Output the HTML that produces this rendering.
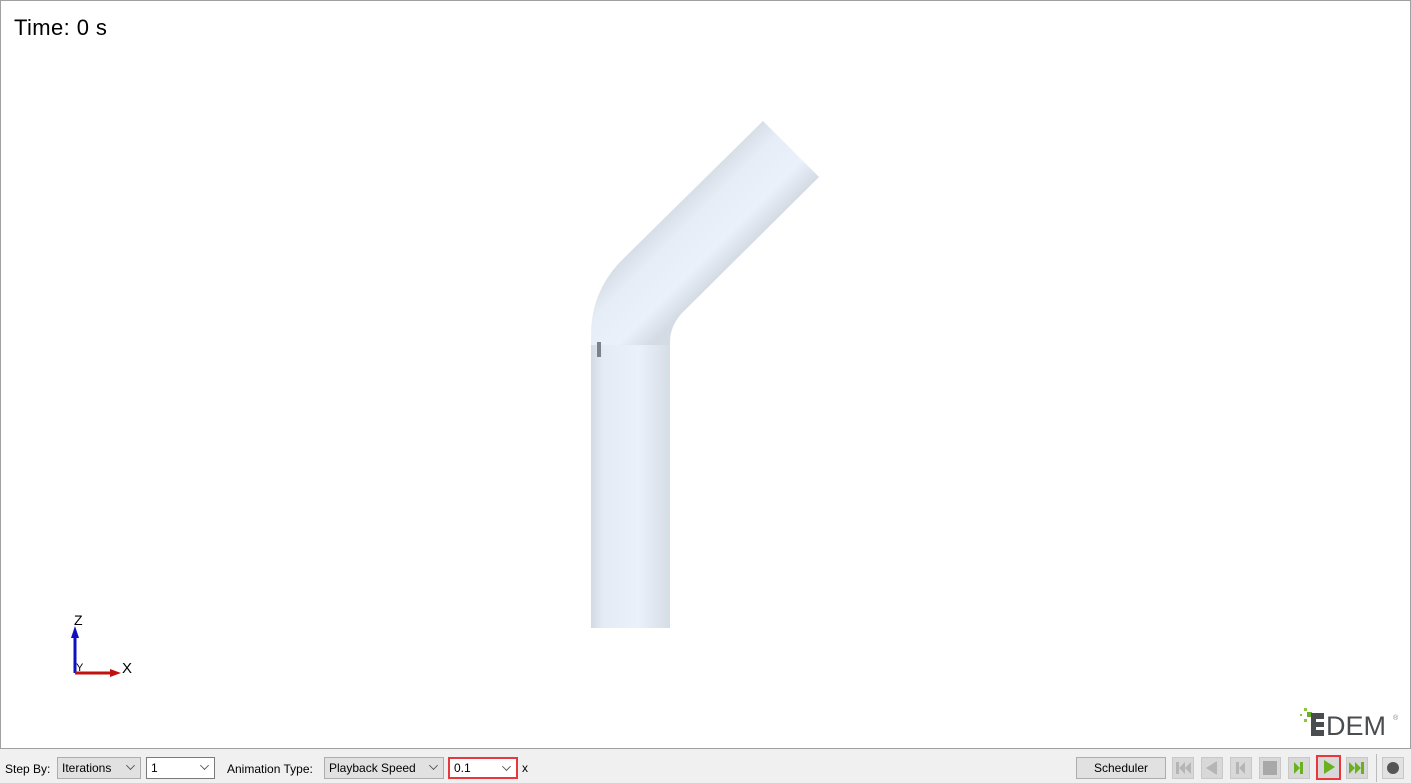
<!DOCTYPE html>
<html><head><style>
*{margin:0;padding:0;box-sizing:border-box}
body{width:1411px;height:783px;background:#f0f0f0;font-family:"Liberation Sans",sans-serif;position:relative;overflow:hidden}
#view{position:absolute;left:0;top:0;width:1411px;height:749px;background:#fff;border:1px solid #a0a0a0}
.t{position:absolute;font-size:12px;color:#000}
.box{position:absolute;top:757px;height:22px;border:1px solid #adadad;background:#e1e1e1;font-size:12px;line-height:20px;padding-left:4px}
.box.w{background:#fff;border-color:#7a7a7a}
.chev{position:absolute;right:6px;width:7px;height:7px;border-right:1px solid #555;border-bottom:1px solid #555;transform:rotate(45deg) scale(.9);top:4px}
.btn{position:absolute;top:757px;width:22px;height:22px;border:1px solid #c8c8c8;background:#d8d8d8}
</style></head><body>
<div id="view">
<div style="position:absolute;left:13px;top:14px;font-size:22px;letter-spacing:0.4px">Time: 0 s</div>
<svg width="1411" height="749" style="position:absolute;left:-1px;top:-1px">
<defs><linearGradient id="g" x1="0" x2="1"><stop offset="0" stop-color="#d2d9e2"/><stop offset=".15" stop-color="#e4ebf4"/><stop offset=".6" stop-color="#eaf1fa"/><stop offset="1" stop-color="#d6dde6"/></linearGradient>
<linearGradient id="g2" gradientUnits="userSpaceOnUse" x1="735" y1="150" x2="790" y2="205"><stop offset="0" stop-color="#d8dfe8"/><stop offset=".25" stop-color="#e6edf7"/><stop offset=".7" stop-color="#eaf1fb"/><stop offset="1" stop-color="#d4dbe4"/></linearGradient></defs>
<path d="M763,121 L819,177 L682,313 Q670,326 670,342 L670,628 L591,628 L591,335 Q591,290 624,258 Z" fill="url(#g2)"/>
<rect x="591" y="345" width="79" height="283" fill="url(#g)"/>
<rect x="597" y="342" width="4" height="15" fill="#7a828c"/>
<line x1="75" y1="673" x2="75" y2="632" stroke="#1010c0" stroke-width="3"/>
<polygon points="71,638 79,638 75,626" fill="#1010c0"/>
<line x1="75" y1="673" x2="113" y2="673" stroke="#c01010" stroke-width="3"/>
<polygon points="110,669 110,677 121,673" fill="#c01010"/>
<text x="74" y="625" font-size="14" font-family="Liberation Sans">Z</text>
<text x="122" y="673" font-size="15" font-family="Liberation Sans">X</text>
<text x="76" y="671" font-size="11" font-family="Liberation Sans">Y</text>
<rect x="1304" y="708" width="3" height="3" fill="#8dc63f"/><rect x="1307" y="712" width="5" height="5" fill="#6ab023"/><rect x="1300" y="714" width="2" height="2" fill="#8dc63f"/><rect x="1304" y="719" width="3" height="3" fill="#8dc63f"/>
<rect x="1311" y="713" width="13" height="23" fill="#4a4d50"/><rect x="1316" y="719" width="8" height="3" fill="#fff"/><rect x="1316" y="727" width="8" height="3" fill="#fff"/>
<text x="1326" y="735" font-size="27" fill="#4a4d50" font-family="Liberation Sans">DEM</text>
<text x="1393" y="720" font-size="7" fill="#888">®</text>
</svg>
</div>
<div class="t" style="left:5px;top:762px">Step By:</div>
<div class="box" style="left:57px;width:84px">Iterations<span class="chev"></span></div>
<div class="box w" style="left:146px;width:69px">1<span class="chev"></span></div>
<div class="t" style="left:227px;top:762px">Animation Type:</div>
<div class="box" style="left:324px;width:120px">Playback Speed<span class="chev"></span></div>
<div class="box w" style="left:448px;width:70px;border:2px solid #e8383d;line-height:18px;padding-left:4px">0.1<span class="chev"></span></div>
<div class="t" style="left:522px;top:761px">x</div>
<div class="box" style="left:1076px;width:90px;padding:0;text-align:center">Scheduler</div>
<div class="btn" style="left:1172px"><svg width="20" height="20"><rect x="3" y="4" width="3" height="12" fill="#b5b5b5"/><polygon points="12,4 6,10 12,16" fill="#b5b5b5"/><polygon points="18,4 12,10 18,16" fill="#b5b5b5"/></svg></div>
<div class="btn" style="left:1201px"><svg width="20" height="20"><polygon points="15,3 4,10 15,17" fill="#b5b5b5"/></svg></div>
<div class="btn" style="left:1230px"><svg width="20" height="20"><rect x="5" y="4" width="3" height="12" fill="#b5b5b5"/><polygon points="14,4 8,10 14,16" fill="#b5b5b5"/></svg></div>
<div class="btn" style="left:1259px"><div style="margin:3px;width:14px;height:14px;background:#a8a8a8"></div></div>
<div class="btn" style="left:1288px"><svg width="20" height="20"><polygon points="5,4 11,10 5,16" fill="#6ab023"/><rect x="11" y="4" width="3" height="12" fill="#6ab023"/></svg></div>
<div class="btn" style="left:1316px;width:25px;height:25px;top:755px;border:2px solid #e8383d"><svg width="21" height="21"><polygon points="6,3 17,10 6,17" fill="#6ab023"/></svg></div>
<div class="btn" style="left:1346px"><svg width="20" height="20"><polygon points="2,4 8,10 2,16" fill="#6ab023"/><polygon points="8,4 14,10 8,16" fill="#6ab023"/><rect x="14" y="4" width="3" height="12" fill="#6ab023"/></svg></div>
<div style="position:absolute;left:1376px;top:754px;width:1px;height:28px;background:#bbb"></div>
<div class="btn" style="left:1382px;background:#e1e1e1"><div style="margin:4px;width:12px;height:12px;border-radius:50%;background:#555"></div></div>
</body></html>
